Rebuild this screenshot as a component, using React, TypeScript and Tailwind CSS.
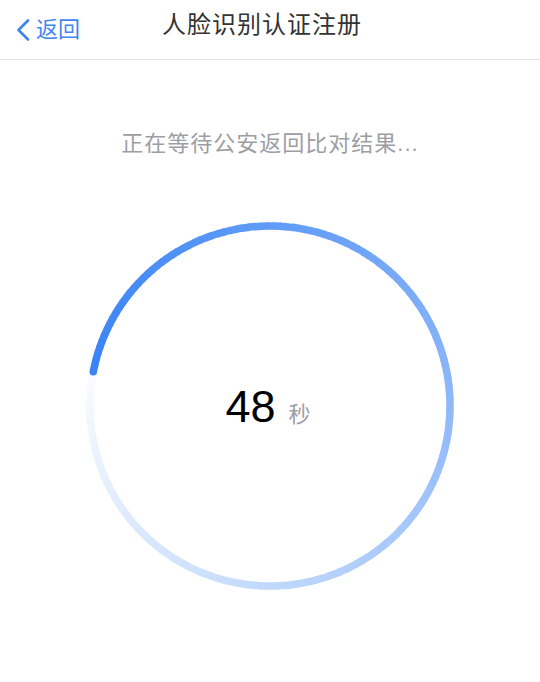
import * as React from "react";

// countdown ring: conic fade drawn as many short arcs (svg has no conic gradient)
const SIZE = 372;
const R = 180;
const SW = 7.5;
const START_DEG = 281;
const SEGMENTS = 180;

function lerpColor(t: number) {
  const from = [0x3b, 0x84, 0xf5];
  const to = [0xfb, 0xfd, 0xff];
  const k = Math.pow(t, 1.08);
  const c = from.map((f, i) => Math.round(f + (to[i] - f) * k));
  return `rgb(${c[0]},${c[1]},${c[2]})`;
}

function pt(deg: number) {
  const rad = ((deg - 90) * Math.PI) / 180;
  return { x: SIZE / 2 + R * Math.cos(rad), y: SIZE / 2 + R * Math.sin(rad) };
}

function CountdownRing() {
  const arcs = React.useMemo(() => {
    const step = 360 / SEGMENTS;
    return Array.from({ length: SEGMENTS }, (_, i) => {
      const a0 = START_DEG + i * step;
      const a1 = a0 + step + 0.4;
      const p0 = pt(a0);
      const p1 = pt(a1);
      return {
        d: `M${p0.x.toFixed(2)} ${p0.y.toFixed(2)} A${R} ${R} 0 0 1 ${p1.x.toFixed(2)} ${p1.y.toFixed(2)}`,
        color: lerpColor(i / SEGMENTS),
      };
    }).reverse();
  }, []);
  const cap = pt(START_DEG);
  return (
    <svg width={SIZE} height={SIZE} viewBox={`0 0 ${SIZE} ${SIZE}`} className="block">
      {arcs.map((a, i) => (
        <path key={i} d={a.d} stroke={a.color} strokeWidth={SW} fill="none" />
      ))}
      <circle cx={cap.x} cy={cap.y} r={SW / 2} fill={lerpColor(0)} />
    </svg>
  );
}

export default function App() {
  return (
    <div className="min-h-[682px] w-full bg-white font-['Liberation_Sans','Noto_Sans_CJK_SC',sans-serif]">
      <header className="relative flex h-[60px] items-center border-b border-[#e4e4e6]">
        <button type="button" className="flex items-center gap-[5px] pl-[15px] text-[22px] leading-none text-[#3f86f2]">
          <svg width="16" height="24" viewBox="0 0 16 24" className="mt-[1px]">
            <path d="M13 2.5 L3.5 12 L13 21.5" stroke="currentColor" strokeWidth="2.6" fill="none" strokeLinecap="round" strokeLinejoin="round" />
          </svg>
          <span className="pt-[1px]">返回</span>
        </button>
        <h1 className="absolute left-0 right-0 top-0 flex h-[50px] items-center justify-center pr-[16px] text-[24px] font-normal tracking-[1px] text-[#333333]">
          人脸识别认证注册
        </h1>
      </header>

      <p className="mt-[71px] text-center text-[22px] leading-[26px] tracking-[1px] text-[#9c9ea4]">
        正在等待公安返回比对结果...
      </p>

      <div className="relative mx-auto mt-[63px] w-[372px]">
        <CountdownRing />
        <div className="absolute inset-0 flex items-baseline justify-center pt-[164px] pr-[4px]">
          <span className="text-[45px] leading-none text-black">48</span>
          <span className="ml-[13px] text-[22px] leading-none text-[#9c9ea4]">秒</span>
        </div>
      </div>
    </div>
  );
}
